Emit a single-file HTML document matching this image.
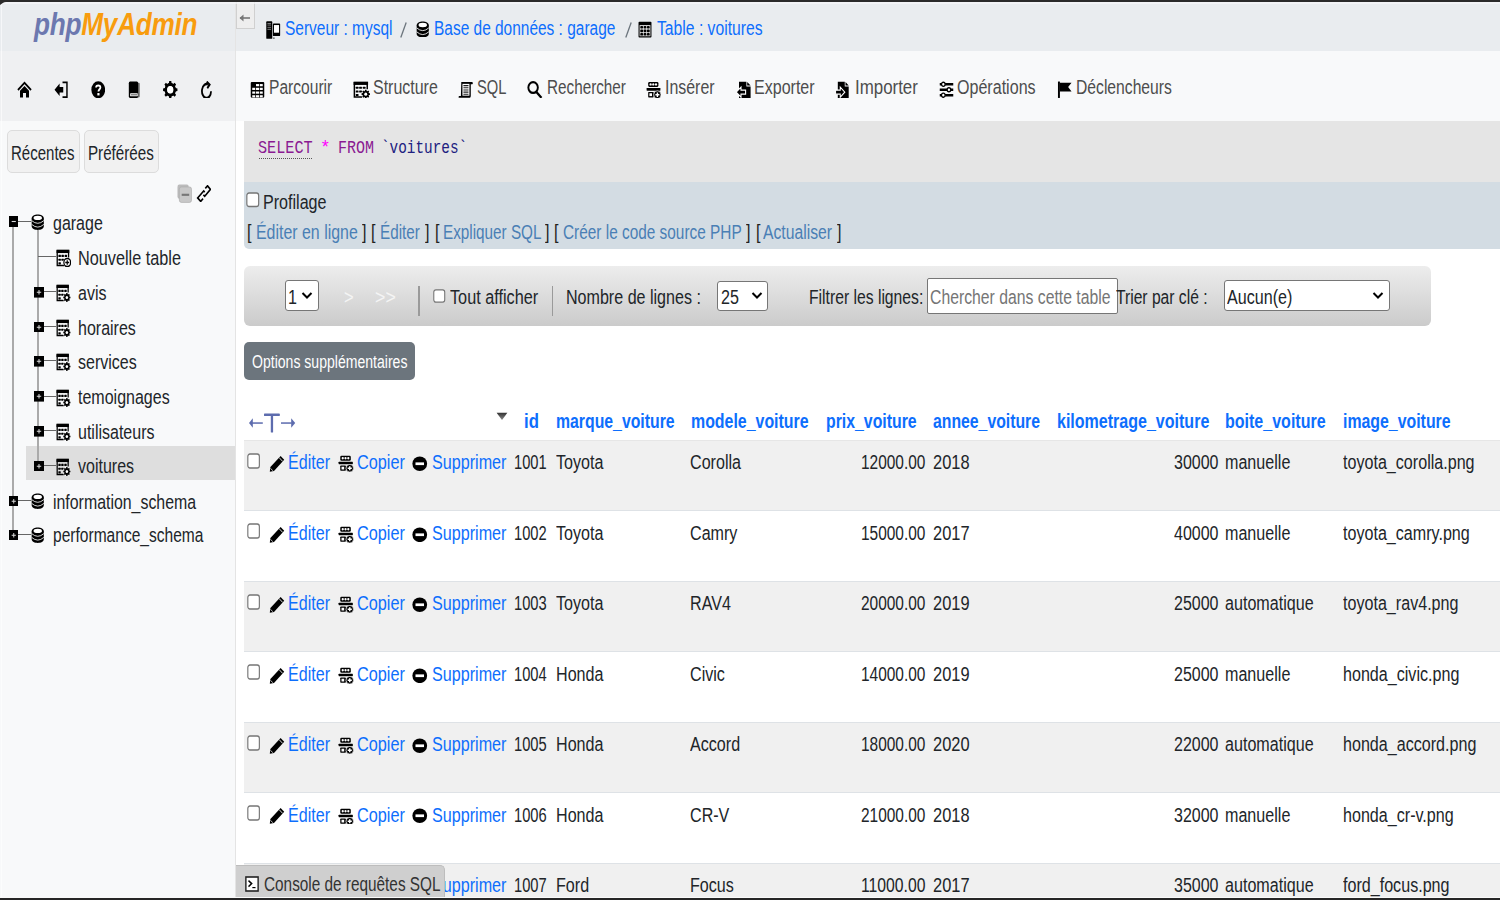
<!DOCTYPE html>
<html><head><meta charset="utf-8"><title>phpMyAdmin</title>
<style>
html,body{margin:0;padding:0;width:1500px;height:900px;overflow:hidden;background:#fff;font-family:"Liberation Sans",sans-serif}
.t{position:absolute;white-space:nowrap;line-height:normal;transform-origin:0 0}
svg{display:block}
</style></head><body>
<div style="position:absolute;left:0px;top:0px;width:1500px;height:2px;background:#2a2a2a;"></div><div style="position:absolute;left:0px;top:2px;width:236px;height:49px;background:#e9ecef;"></div><div style="position:absolute;left:0px;top:51px;width:236px;height:70px;background:#eff0f2;"></div><div style="position:absolute;left:0px;top:121px;width:236px;height:777px;background:#f8f9fa;"></div><div style="position:absolute;left:235px;top:2px;width:1px;height:896px;background:#e4e4e4;"></div><div style="position:absolute;left:236px;top:121px;width:2px;height:776px;background:#f4f4f4;"></div><div style="position:absolute;left:236px;top:2px;width:1264px;height:49px;background:#e9ecef;"></div><div style="position:absolute;left:236px;top:51px;width:1264px;height:70px;background:#f8f9fa;"></div><div style="position:absolute;left:236px;top:121px;width:1264px;height:777px;background:#ffffff;"></div><div style="position:absolute;left:34px;top:7px;font-family:'Liberation Sans';font-size:31px;font-weight:bold;font-style:italic;white-space:nowrap;transform-origin:0 0;transform:scaleX(0.845);letter-spacing:-0.3px"><span style="color:#6c78af">php</span><span style="color:#f89c0e">MyAdmin</span></div><svg style="position:absolute;left:17px;top:80.5px;" width="15" height="17.5" viewBox="0 0 16 16" preserveAspectRatio="none"><path d="M1 8.2 L8 1.6 L15 8.2" fill="none" stroke="#000" stroke-width="1.8"/><path d="M3.2 9 L8 4.6 L12.8 9 V15 H9.6 V11 H6.4 V15 H3.2 Z" fill="#000"/></svg><svg style="position:absolute;left:54px;top:80.5px;" width="14.5" height="17.5" viewBox="0 0 16 16" preserveAspectRatio="none"><path d="M0.6 8 L6.2 2.2 V5.4 H10.2 V10.6 H6.2 V13.8 Z" fill="#000"/><path d="M9.4 1.2 H14.3 V14.8 H9.4" fill="none" stroke="#000" stroke-width="1.6"/></svg><svg style="position:absolute;left:90.5px;top:80.5px;" width="14.5" height="17.5" viewBox="0 0 16 16" preserveAspectRatio="none"><ellipse cx="8" cy="8" rx="7.6" ry="7.8" fill="#000"/><path d="M5.6 6 C5.6 3.4 10.4 3.4 10.4 6 C10.4 7.6 8.2 7.8 8.2 9.6" fill="none" stroke="#fff" stroke-width="1.9"/><rect x="7" y="11" width="2.4" height="2.2" fill="#fff"/></svg><svg style="position:absolute;left:127.5px;top:80.5px;" width="13.0" height="17.5" viewBox="0 0 16 16" preserveAspectRatio="none"><rect x="2.5" y="1.5" width="12" height="13.5" rx="1.2" fill="#777"/><rect x="1" y="0.5" width="11.5" height="15" rx="1.6" fill="#000"/><rect x="2.6" y="11.2" width="9.5" height="2.8" rx="0.6" fill="#fff"/><rect x="3.4" y="12" width="8.2" height="1.2" fill="#777"/></svg><svg style="position:absolute;left:163px;top:80.5px;" width="14.5" height="17.5" viewBox="0 0 16 16" preserveAspectRatio="none"><path d="M13.72 6.48 L15.92 6.86 L15.92 9.14 L13.72 9.52 L13.12 10.97 L14.41 12.79 L12.79 14.41 L10.97 13.12 L9.52 13.72 L9.14 15.92 L6.86 15.92 L6.48 13.72 L5.03 13.12 L3.21 14.41 L1.59 12.79 L2.88 10.97 L2.28 9.52 L0.08 9.14 L0.08 6.86 L2.28 6.48 L2.88 5.03 L1.59 3.21 L3.21 1.59 L5.03 2.88 L6.48 2.28 L6.86 0.08 L9.14 0.08 L9.52 2.28 L10.97 2.88 L12.79 1.59 L14.41 3.21 L13.12 5.03Z" fill="#000"/><circle cx="8" cy="8" r="3.3" fill="#fff"/><circle cx="8" cy="8" r="5" fill="none" stroke="#000" stroke-width="2.6"/><circle cx="8" cy="8" r="3.4" fill="#fff"/></svg><svg style="position:absolute;left:200px;top:80.5px;" width="13" height="17.5" viewBox="0 0 16 16" preserveAspectRatio="none"><path d="M13.6 9.4 A5.6 6.4 0 1 1 9.8 3.1" fill="none" stroke="#000" stroke-width="2.2"/><path d="M8.2 0.6 L11.8 3.3 L9 6.6" fill="none" stroke="#000" stroke-width="2.2"/></svg><div style="position:absolute;left:6.5px;top:130px;width:73.0px;height:43px;background:#f1f1f1;border:1px solid #dcdcdc;border-radius:5px;box-sizing:border-box"></div><div style="position:absolute;left:83.5px;top:130px;width:75.0px;height:43px;background:#f1f1f1;border:1px solid #dcdcdc;border-radius:5px;box-sizing:border-box"></div><svg style="position:absolute;left:177px;top:184px;" width="15" height="19" viewBox="0 0 16 16" preserveAspectRatio="none"><rect x="0.5" y="0.5" width="12" height="12" rx="2" fill="#bbb"/><rect x="2.5" y="2.5" width="13" height="13" rx="2" fill="#c8c8c8" stroke="#aaa" stroke-width="0.6"/><rect x="5" y="8.2" width="8" height="1.8" fill="#777"/></svg><svg style="position:absolute;left:196px;top:185px;" width="15" height="17" viewBox="0 0 16 16" preserveAspectRatio="none"><path d="M9.9 3.2 L12.3 0.8 L15.4 4.2 L9.3 10.6 L7.9 9.2" fill="none" stroke="#000" stroke-width="1.7" stroke-linejoin="miter"/><path d="M9.3 6.8 L8.2 5.6 L1.8 12.2 L5 15.4 L7.5 12.9" fill="none" stroke="#000" stroke-width="1.7" stroke-linejoin="miter"/></svg><div style="position:absolute;left:26px;top:445.5px;width:209px;height:34.5px;background:#dedede;"></div><div style="position:absolute;left:12px;top:227px;width:2px;height:309px;background:#aaa;"></div><div style="position:absolute;left:37px;top:230px;width:1.7999999999999972px;height:238px;background:#aaa;"></div><svg style="position:absolute;left:8.5px;top:216px;" width="9.5" height="11" viewBox="0 0 16 16" preserveAspectRatio="none"><rect x="0" y="0" width="16" height="16" fill="#000"/><path d="M4.5 8 H11.5" stroke="#ddd" stroke-width="1.6"/></svg><div style="position:absolute;left:18px;top:221px;width:13px;height:1.1999999999999886px;background:#666;"></div><svg style="position:absolute;left:31px;top:214px;" width="13.5" height="16" viewBox="0 0 16 16" preserveAspectRatio="none"><path d="M0.8 4.2 C0.8 -0.9 15.2 -0.9 15.2 4.2 V12.2 C15.2 17.1 0.8 17.1 0.8 12.2 Z" fill="#000"/><ellipse cx="8" cy="3.9" rx="5" ry="2.1" fill="#fff"/><path d="M0.8 6.6 Q8 12 15.2 6.6" fill="none" stroke="#fff" stroke-width="0.9"/><path d="M0.8 10.4 Q8 15.8 15.2 10.4" fill="none" stroke="#fff" stroke-width="0.9"/></svg><div style="position:absolute;left:38px;top:256.3px;width:18px;height:1.1999999999999886px;background:#666;"></div><svg style="position:absolute;left:56px;top:249px;" width="15" height="18" viewBox="0 0 16 16" preserveAspectRatio="none"><rect x="0.6" y="0.6" width="13.6" height="3" fill="#000"/><path d="M1.3 1 V14.6 H8.5 M13.4 1 V7.5" fill="none" stroke="#000" stroke-width="1.4"/><rect x="2.6" y="5.2" width="2.6" height="1.9" rx="0.5" fill="#000"/><rect x="5.8" y="5.2" width="2.6" height="1.9" rx="0.5" fill="#000"/><rect x="9.2" y="5.2" width="2.6" height="1.9" rx="0.5" fill="#000"/><rect x="2.6" y="8.6" width="2.6" height="1.9" rx="0.5" fill="#000"/><rect x="5.8" y="8.6" width="2.6" height="1.9" rx="0.5" fill="#000"/><rect x="2.6" y="11.8" width="2.6" height="1.9" rx="0.5" fill="#000"/><circle cx="12" cy="12" r="4.3" fill="#fff"/><circle cx="12" cy="12" r="3.6" fill="none" stroke="#000" stroke-width="1.3"/><path d="M9.9 12 H14.1 M12 9.9 V14.1" stroke="#000" stroke-width="1.3"/></svg><svg style="position:absolute;left:33.5px;top:287.0px;" width="10.0" height="10.599999999999966" viewBox="0 0 16 16" preserveAspectRatio="none"><rect x="0" y="0" width="16" height="16" fill="#000"/><path d="M4.5 8 H11.5 M8 4.5 V11.5" stroke="#ddd" stroke-width="1.6"/></svg><div style="position:absolute;left:43.5px;top:291.2px;width:12.5px;height:1.1999999999999886px;background:#666;"></div><svg style="position:absolute;left:56px;top:284.2px;" width="14.5" height="18.0" viewBox="0 0 16 16" preserveAspectRatio="none"><rect x="0.6" y="0.6" width="13.6" height="3" fill="#000"/><path d="M1.3 1 V14.6 H8.5 M13.4 1 V7.5" fill="none" stroke="#000" stroke-width="1.4"/><rect x="2.6" y="5.2" width="2.6" height="1.9" rx="0.5" fill="#000"/><rect x="5.8" y="5.2" width="2.6" height="1.9" rx="0.5" fill="#000"/><rect x="9.2" y="5.2" width="2.6" height="1.9" rx="0.5" fill="#000"/><rect x="2.6" y="8.6" width="2.6" height="1.9" rx="0.5" fill="#000"/><rect x="5.8" y="8.6" width="2.6" height="1.9" rx="0.5" fill="#000"/><rect x="2.6" y="11.8" width="2.6" height="1.9" rx="0.5" fill="#000"/><circle cx="12" cy="12" r="4.2" fill="#fff" opacity="0.9"/><path d="M14.81 11.07 L15.94 11.30 L15.94 12.70 L14.81 12.93 L14.65 13.33 L15.28 14.29 L14.29 15.28 L13.33 14.65 L12.93 14.81 L12.70 15.94 L11.30 15.94 L11.07 14.81 L10.67 14.65 L9.71 15.28 L8.72 14.29 L9.35 13.33 L9.19 12.93 L8.06 12.70 L8.06 11.30 L9.19 11.07 L9.35 10.67 L8.72 9.71 L9.71 8.72 L10.67 9.35 L11.07 9.19 L11.30 8.06 L12.70 8.06 L12.93 9.19 L13.33 9.35 L14.29 8.72 L15.28 9.71 L14.65 10.67Z" fill="#000"/><circle cx="12" cy="12" r="1.4" fill="#fff"/></svg><svg style="position:absolute;left:33.5px;top:321.8px;" width="10.0" height="10.599999999999966" viewBox="0 0 16 16" preserveAspectRatio="none"><rect x="0" y="0" width="16" height="16" fill="#000"/><path d="M4.5 8 H11.5 M8 4.5 V11.5" stroke="#ddd" stroke-width="1.6"/></svg><div style="position:absolute;left:43.5px;top:326px;width:12.5px;height:1.1999999999999886px;background:#666;"></div><svg style="position:absolute;left:56px;top:319px;" width="14.5" height="18" viewBox="0 0 16 16" preserveAspectRatio="none"><rect x="0.6" y="0.6" width="13.6" height="3" fill="#000"/><path d="M1.3 1 V14.6 H8.5 M13.4 1 V7.5" fill="none" stroke="#000" stroke-width="1.4"/><rect x="2.6" y="5.2" width="2.6" height="1.9" rx="0.5" fill="#000"/><rect x="5.8" y="5.2" width="2.6" height="1.9" rx="0.5" fill="#000"/><rect x="9.2" y="5.2" width="2.6" height="1.9" rx="0.5" fill="#000"/><rect x="2.6" y="8.6" width="2.6" height="1.9" rx="0.5" fill="#000"/><rect x="5.8" y="8.6" width="2.6" height="1.9" rx="0.5" fill="#000"/><rect x="2.6" y="11.8" width="2.6" height="1.9" rx="0.5" fill="#000"/><circle cx="12" cy="12" r="4.2" fill="#fff" opacity="0.9"/><path d="M14.81 11.07 L15.94 11.30 L15.94 12.70 L14.81 12.93 L14.65 13.33 L15.28 14.29 L14.29 15.28 L13.33 14.65 L12.93 14.81 L12.70 15.94 L11.30 15.94 L11.07 14.81 L10.67 14.65 L9.71 15.28 L8.72 14.29 L9.35 13.33 L9.19 12.93 L8.06 12.70 L8.06 11.30 L9.19 11.07 L9.35 10.67 L8.72 9.71 L9.71 8.72 L10.67 9.35 L11.07 9.19 L11.30 8.06 L12.70 8.06 L12.93 9.19 L13.33 9.35 L14.29 8.72 L15.28 9.71 L14.65 10.67Z" fill="#000"/><circle cx="12" cy="12" r="1.4" fill="#fff"/></svg><svg style="position:absolute;left:33.5px;top:356.1px;" width="10.0" height="10.599999999999966" viewBox="0 0 16 16" preserveAspectRatio="none"><rect x="0" y="0" width="16" height="16" fill="#000"/><path d="M4.5 8 H11.5 M8 4.5 V11.5" stroke="#ddd" stroke-width="1.6"/></svg><div style="position:absolute;left:43.5px;top:360.3px;width:12.5px;height:1.1999999999999886px;background:#666;"></div><svg style="position:absolute;left:56px;top:353.3px;" width="14.5" height="18.0" viewBox="0 0 16 16" preserveAspectRatio="none"><rect x="0.6" y="0.6" width="13.6" height="3" fill="#000"/><path d="M1.3 1 V14.6 H8.5 M13.4 1 V7.5" fill="none" stroke="#000" stroke-width="1.4"/><rect x="2.6" y="5.2" width="2.6" height="1.9" rx="0.5" fill="#000"/><rect x="5.8" y="5.2" width="2.6" height="1.9" rx="0.5" fill="#000"/><rect x="9.2" y="5.2" width="2.6" height="1.9" rx="0.5" fill="#000"/><rect x="2.6" y="8.6" width="2.6" height="1.9" rx="0.5" fill="#000"/><rect x="5.8" y="8.6" width="2.6" height="1.9" rx="0.5" fill="#000"/><rect x="2.6" y="11.8" width="2.6" height="1.9" rx="0.5" fill="#000"/><circle cx="12" cy="12" r="4.2" fill="#fff" opacity="0.9"/><path d="M14.81 11.07 L15.94 11.30 L15.94 12.70 L14.81 12.93 L14.65 13.33 L15.28 14.29 L14.29 15.28 L13.33 14.65 L12.93 14.81 L12.70 15.94 L11.30 15.94 L11.07 14.81 L10.67 14.65 L9.71 15.28 L8.72 14.29 L9.35 13.33 L9.19 12.93 L8.06 12.70 L8.06 11.30 L9.19 11.07 L9.35 10.67 L8.72 9.71 L9.71 8.72 L10.67 9.35 L11.07 9.19 L11.30 8.06 L12.70 8.06 L12.93 9.19 L13.33 9.35 L14.29 8.72 L15.28 9.71 L14.65 10.67Z" fill="#000"/><circle cx="12" cy="12" r="1.4" fill="#fff"/></svg><svg style="position:absolute;left:33.5px;top:391.40000000000003px;" width="10.0" height="10.599999999999966" viewBox="0 0 16 16" preserveAspectRatio="none"><rect x="0" y="0" width="16" height="16" fill="#000"/><path d="M4.5 8 H11.5 M8 4.5 V11.5" stroke="#ddd" stroke-width="1.6"/></svg><div style="position:absolute;left:43.5px;top:395.6px;width:12.5px;height:1.1999999999999886px;background:#666;"></div><svg style="position:absolute;left:56px;top:388.6px;" width="14.5" height="18.0" viewBox="0 0 16 16" preserveAspectRatio="none"><rect x="0.6" y="0.6" width="13.6" height="3" fill="#000"/><path d="M1.3 1 V14.6 H8.5 M13.4 1 V7.5" fill="none" stroke="#000" stroke-width="1.4"/><rect x="2.6" y="5.2" width="2.6" height="1.9" rx="0.5" fill="#000"/><rect x="5.8" y="5.2" width="2.6" height="1.9" rx="0.5" fill="#000"/><rect x="9.2" y="5.2" width="2.6" height="1.9" rx="0.5" fill="#000"/><rect x="2.6" y="8.6" width="2.6" height="1.9" rx="0.5" fill="#000"/><rect x="5.8" y="8.6" width="2.6" height="1.9" rx="0.5" fill="#000"/><rect x="2.6" y="11.8" width="2.6" height="1.9" rx="0.5" fill="#000"/><circle cx="12" cy="12" r="4.2" fill="#fff" opacity="0.9"/><path d="M14.81 11.07 L15.94 11.30 L15.94 12.70 L14.81 12.93 L14.65 13.33 L15.28 14.29 L14.29 15.28 L13.33 14.65 L12.93 14.81 L12.70 15.94 L11.30 15.94 L11.07 14.81 L10.67 14.65 L9.71 15.28 L8.72 14.29 L9.35 13.33 L9.19 12.93 L8.06 12.70 L8.06 11.30 L9.19 11.07 L9.35 10.67 L8.72 9.71 L9.71 8.72 L10.67 9.35 L11.07 9.19 L11.30 8.06 L12.70 8.06 L12.93 9.19 L13.33 9.35 L14.29 8.72 L15.28 9.71 L14.65 10.67Z" fill="#000"/><circle cx="12" cy="12" r="1.4" fill="#fff"/></svg><svg style="position:absolute;left:33.5px;top:426.1px;" width="10.0" height="10.599999999999966" viewBox="0 0 16 16" preserveAspectRatio="none"><rect x="0" y="0" width="16" height="16" fill="#000"/><path d="M4.5 8 H11.5 M8 4.5 V11.5" stroke="#ddd" stroke-width="1.6"/></svg><div style="position:absolute;left:43.5px;top:430.3px;width:12.5px;height:1.1999999999999886px;background:#666;"></div><svg style="position:absolute;left:56px;top:423.3px;" width="14.5" height="18.0" viewBox="0 0 16 16" preserveAspectRatio="none"><rect x="0.6" y="0.6" width="13.6" height="3" fill="#000"/><path d="M1.3 1 V14.6 H8.5 M13.4 1 V7.5" fill="none" stroke="#000" stroke-width="1.4"/><rect x="2.6" y="5.2" width="2.6" height="1.9" rx="0.5" fill="#000"/><rect x="5.8" y="5.2" width="2.6" height="1.9" rx="0.5" fill="#000"/><rect x="9.2" y="5.2" width="2.6" height="1.9" rx="0.5" fill="#000"/><rect x="2.6" y="8.6" width="2.6" height="1.9" rx="0.5" fill="#000"/><rect x="5.8" y="8.6" width="2.6" height="1.9" rx="0.5" fill="#000"/><rect x="2.6" y="11.8" width="2.6" height="1.9" rx="0.5" fill="#000"/><circle cx="12" cy="12" r="4.2" fill="#fff" opacity="0.9"/><path d="M14.81 11.07 L15.94 11.30 L15.94 12.70 L14.81 12.93 L14.65 13.33 L15.28 14.29 L14.29 15.28 L13.33 14.65 L12.93 14.81 L12.70 15.94 L11.30 15.94 L11.07 14.81 L10.67 14.65 L9.71 15.28 L8.72 14.29 L9.35 13.33 L9.19 12.93 L8.06 12.70 L8.06 11.30 L9.19 11.07 L9.35 10.67 L8.72 9.71 L9.71 8.72 L10.67 9.35 L11.07 9.19 L11.30 8.06 L12.70 8.06 L12.93 9.19 L13.33 9.35 L14.29 8.72 L15.28 9.71 L14.65 10.67Z" fill="#000"/><circle cx="12" cy="12" r="1.4" fill="#fff"/></svg><svg style="position:absolute;left:33.5px;top:460.6px;" width="10.0" height="10.599999999999966" viewBox="0 0 16 16" preserveAspectRatio="none"><rect x="0" y="0" width="16" height="16" fill="#000"/><path d="M4.5 8 H11.5 M8 4.5 V11.5" stroke="#ddd" stroke-width="1.6"/></svg><div style="position:absolute;left:43.5px;top:464.8px;width:12.5px;height:1.1999999999999886px;background:#666;"></div><svg style="position:absolute;left:56px;top:457.8px;" width="14.5" height="18.0" viewBox="0 0 16 16" preserveAspectRatio="none"><rect x="0.6" y="0.6" width="13.6" height="3" fill="#000"/><path d="M1.3 1 V14.6 H8.5 M13.4 1 V7.5" fill="none" stroke="#000" stroke-width="1.4"/><rect x="2.6" y="5.2" width="2.6" height="1.9" rx="0.5" fill="#000"/><rect x="5.8" y="5.2" width="2.6" height="1.9" rx="0.5" fill="#000"/><rect x="9.2" y="5.2" width="2.6" height="1.9" rx="0.5" fill="#000"/><rect x="2.6" y="8.6" width="2.6" height="1.9" rx="0.5" fill="#000"/><rect x="5.8" y="8.6" width="2.6" height="1.9" rx="0.5" fill="#000"/><rect x="2.6" y="11.8" width="2.6" height="1.9" rx="0.5" fill="#000"/><circle cx="12" cy="12" r="4.2" fill="#fff" opacity="0.9"/><path d="M14.81 11.07 L15.94 11.30 L15.94 12.70 L14.81 12.93 L14.65 13.33 L15.28 14.29 L14.29 15.28 L13.33 14.65 L12.93 14.81 L12.70 15.94 L11.30 15.94 L11.07 14.81 L10.67 14.65 L9.71 15.28 L8.72 14.29 L9.35 13.33 L9.19 12.93 L8.06 12.70 L8.06 11.30 L9.19 11.07 L9.35 10.67 L8.72 9.71 L9.71 8.72 L10.67 9.35 L11.07 9.19 L11.30 8.06 L12.70 8.06 L12.93 9.19 L13.33 9.35 L14.29 8.72 L15.28 9.71 L14.65 10.67Z" fill="#000"/><circle cx="12" cy="12" r="1.4" fill="#fff"/></svg><svg style="position:absolute;left:8.5px;top:495.8px;" width="9.5" height="10.599999999999966" viewBox="0 0 16 16" preserveAspectRatio="none"><rect x="0" y="0" width="16" height="16" fill="#000"/><path d="M4.5 8 H11.5 M8 4.5 V11.5" stroke="#ddd" stroke-width="1.6"/></svg><div style="position:absolute;left:18px;top:500px;width:13px;height:1.1999999999999886px;background:#666;"></div><svg style="position:absolute;left:31px;top:493px;" width="13.5" height="16" viewBox="0 0 16 16" preserveAspectRatio="none"><path d="M0.8 4.2 C0.8 -0.9 15.2 -0.9 15.2 4.2 V12.2 C15.2 17.1 0.8 17.1 0.8 12.2 Z" fill="#000"/><ellipse cx="8" cy="3.9" rx="5" ry="2.1" fill="#fff"/><path d="M0.8 6.6 Q8 12 15.2 6.6" fill="none" stroke="#fff" stroke-width="0.9"/><path d="M0.8 10.4 Q8 15.8 15.2 10.4" fill="none" stroke="#fff" stroke-width="0.9"/></svg><svg style="position:absolute;left:8.5px;top:529.5999999999999px;" width="9.5" height="10.600000000000023" viewBox="0 0 16 16" preserveAspectRatio="none"><rect x="0" y="0" width="16" height="16" fill="#000"/><path d="M4.5 8 H11.5 M8 4.5 V11.5" stroke="#ddd" stroke-width="1.6"/></svg><div style="position:absolute;left:18px;top:533.8px;width:13px;height:1.2000000000000455px;background:#666;"></div><svg style="position:absolute;left:31px;top:526.8px;" width="13.5" height="16.0" viewBox="0 0 16 16" preserveAspectRatio="none"><path d="M0.8 4.2 C0.8 -0.9 15.2 -0.9 15.2 4.2 V12.2 C15.2 17.1 0.8 17.1 0.8 12.2 Z" fill="#000"/><ellipse cx="8" cy="3.9" rx="5" ry="2.1" fill="#fff"/><path d="M0.8 6.6 Q8 12 15.2 6.6" fill="none" stroke="#fff" stroke-width="0.9"/><path d="M0.8 10.4 Q8 15.8 15.2 10.4" fill="none" stroke="#fff" stroke-width="0.9"/></svg><div style="position:absolute;left:235.5px;top:2px;width:19.0px;height:26.5px;background:#eeeeee;border:1px solid #d0d0d0;border-top:none;box-sizing:border-box"></div><svg style="position:absolute;left:239px;top:13px" width="12" height="10" viewBox="0 0 12 10"><path d="M1 5 H11" stroke="#777" stroke-width="1.6"/><path d="M0.5 5 L4.5 1.5 L4.5 8.5 Z" fill="#777"/></svg><svg style="position:absolute;left:266px;top:20.5px;" width="14.5" height="18.0" viewBox="0 0 16 16" preserveAspectRatio="none"><rect x="0.3" y="0.2" width="6.6" height="15.6" rx="0.8" fill="#000"/><path d="M1.6 2.2 H5.6 M1.6 3.6 H5.6 M1.6 5.6 H5.6 M1.6 7.4 H5.6" stroke="#ccc" stroke-width="0.6"/><rect x="7.6" y="2.2" width="8" height="11.2" rx="0.8" fill="#000"/><rect x="8.8" y="3.6" width="5.6" height="6.8" fill="#fff"/><rect x="7.6" y="14.8" width="2" height="0.8" fill="#222"/></svg><svg style="position:absolute;left:399.5px;top:21.5px;" width="7.0" height="16.0" viewBox="0 0 7 16" preserveAspectRatio="none"><path d="M0.8 15.5 L6.2 0.5" stroke="#6c757d" stroke-width="1.3"/></svg><svg style="position:absolute;left:415.5px;top:20.7px;" width="13.5" height="16.599999999999998" viewBox="0 0 16 16" preserveAspectRatio="none"><path d="M0.8 4.2 C0.8 -0.9 15.2 -0.9 15.2 4.2 V12.2 C15.2 17.1 0.8 17.1 0.8 12.2 Z" fill="#000"/><ellipse cx="8" cy="3.9" rx="5" ry="2.1" fill="#fff"/><path d="M0.8 6.6 Q8 12 15.2 6.6" fill="none" stroke="#fff" stroke-width="0.9"/><path d="M0.8 10.4 Q8 15.8 15.2 10.4" fill="none" stroke="#fff" stroke-width="0.9"/></svg><svg style="position:absolute;left:624.5px;top:21.5px;" width="7.0" height="16.0" viewBox="0 0 7 16" preserveAspectRatio="none"><path d="M0.8 15.5 L6.2 0.5" stroke="#6c757d" stroke-width="1.3"/></svg><svg style="position:absolute;left:638px;top:20.8px;" width="14" height="17.2" viewBox="0 0 16 16" preserveAspectRatio="none"><rect x="0.6" y="0.6" width="14.8" height="14.8" rx="1" fill="#000"/><rect x="1.8" y="3.8" width="12.4" height="10.4" fill="#ddd"/><rect x="2.6" y="4.6" width="3.2" height="2.4" rx="0.9" fill="#000"/><rect x="2.6" y="8" width="3.2" height="2.4" rx="0.9" fill="#000"/><rect x="2.6" y="11.2" width="3.2" height="2.4" rx="0.9" fill="#000"/><rect x="6.4" y="4.6" width="3.2" height="2.4" rx="0.9" fill="#000"/><rect x="6.4" y="8" width="3.2" height="2.4" rx="0.9" fill="#000"/><rect x="6.4" y="11.2" width="3.2" height="2.4" rx="0.9" fill="#000"/><rect x="10.2" y="4.6" width="3.2" height="2.4" rx="0.9" fill="#000"/><rect x="10.2" y="8" width="3.2" height="2.4" rx="0.9" fill="#000"/><rect x="10.2" y="11.2" width="3.2" height="2.4" rx="0.9" fill="#000"/></svg><svg style="position:absolute;left:250px;top:80.5px;" width="15" height="17.5" viewBox="0 0 16 16" preserveAspectRatio="none"><rect x="0.8" y="0.8" width="14.4" height="14.4" rx="1" fill="#000"/><rect x="2.4" y="6.2" width="3.2" height="2" fill="#fff"/><rect x="2.4" y="9.6" width="3.2" height="2" fill="#fff"/><rect x="2.4" y="13" width="3.2" height="2" fill="#fff"/><rect x="6.4" y="2.8" width="3.2" height="2" fill="#fff"/><rect x="6.4" y="6.2" width="3.2" height="2" fill="#fff"/><rect x="6.4" y="9.6" width="3.2" height="2" fill="#fff"/><rect x="6.4" y="13" width="3.2" height="2" fill="#fff"/><rect x="10.4" y="2.8" width="3.2" height="2" fill="#fff"/><rect x="10.4" y="6.2" width="3.2" height="2" fill="#fff"/><rect x="10.4" y="9.6" width="3.2" height="2" fill="#fff"/><rect x="10.4" y="13" width="3.2" height="2" fill="#fff"/></svg><svg style="position:absolute;left:352.5px;top:80.5px;" width="17.0" height="17.5" viewBox="0 0 16 16" preserveAspectRatio="none"><rect x="0.6" y="0.6" width="13.6" height="3" fill="#000"/><path d="M1.3 1 V14.6 H8.5 M13.4 1 V7.5" fill="none" stroke="#000" stroke-width="1.4"/><rect x="2.6" y="5.2" width="2.6" height="1.9" rx="0.5" fill="#000"/><rect x="5.8" y="5.2" width="2.6" height="1.9" rx="0.5" fill="#000"/><rect x="9.2" y="5.2" width="2.6" height="1.9" rx="0.5" fill="#000"/><rect x="2.6" y="8.6" width="2.6" height="1.9" rx="0.5" fill="#000"/><rect x="5.8" y="8.6" width="2.6" height="1.9" rx="0.5" fill="#000"/><rect x="2.6" y="11.8" width="2.6" height="1.9" rx="0.5" fill="#000"/><circle cx="12" cy="12" r="4.2" fill="#fff" opacity="0.9"/><path d="M14.81 11.07 L15.94 11.30 L15.94 12.70 L14.81 12.93 L14.65 13.33 L15.28 14.29 L14.29 15.28 L13.33 14.65 L12.93 14.81 L12.70 15.94 L11.30 15.94 L11.07 14.81 L10.67 14.65 L9.71 15.28 L8.72 14.29 L9.35 13.33 L9.19 12.93 L8.06 12.70 L8.06 11.30 L9.19 11.07 L9.35 10.67 L8.72 9.71 L9.71 8.72 L10.67 9.35 L11.07 9.19 L11.30 8.06 L12.70 8.06 L12.93 9.19 L13.33 9.35 L14.29 8.72 L15.28 9.71 L14.65 10.67Z" fill="#000"/><circle cx="12" cy="12" r="1.4" fill="#fff"/></svg><svg style="position:absolute;left:458px;top:80.5px;" width="15.5" height="17.5" viewBox="0 0 16 16" preserveAspectRatio="none"><path d="M3.4 0.8 H14.6 C15.6 0.8 15.6 3 14.6 3 H13.2 V13.4 C13.2 14.8 12.4 15.4 11.4 15.4 H1.2 C0.4 15.4 0.4 13.6 1.4 13.6 H3 Z" fill="#000"/><rect x="4.6" y="2.6" width="7.2" height="10.8" fill="#fff"/><path d="M5.6 4.2 H10.8 M5.6 6.2 H10.8 M5.6 8.2 H10.8 M5.6 10.2 H10.8 M5.6 12.1 H10.8" stroke="#222" stroke-width="1"/></svg><svg style="position:absolute;left:527px;top:80.5px;" width="15.5" height="17.5" viewBox="0 0 16 16" preserveAspectRatio="none"><circle cx="6.3" cy="6" r="4.9" fill="none" stroke="#000" stroke-width="2"/><path d="M9.6 10 L15 15.4" stroke="#000" stroke-width="2.2"/></svg><svg style="position:absolute;left:646px;top:80.5px;" width="16" height="17.5" viewBox="0 0 16 16" preserveAspectRatio="none"><rect x="2.2" y="0.8" width="10.2" height="4.6" rx="1.2" fill="#000"/><circle cx="4.6" cy="3.1" r="1.1" fill="#fff"/><circle cx="7.3" cy="3.1" r="1.1" fill="#fff"/><circle cx="10" cy="3.1" r="1.1" fill="#fff"/><rect x="0.6" y="6.4" width="13.8" height="2.4" rx="0.4" fill="#000"/><rect x="2.2" y="10" width="5.4" height="5" rx="0.6" fill="#000"/><rect x="3.4" y="11.2" width="2.6" height="2.6" fill="#fff"/><circle cx="11.4" cy="12.6" r="3.6" fill="#000" stroke="#fff" stroke-width="0.6"/><path d="M9.4 12.6 H13.4 M11.4 10.6 V14.6" stroke="#fff" stroke-width="1.4"/></svg><svg style="position:absolute;left:736px;top:80.5px;" width="16" height="17.5" viewBox="0 0 16 16" preserveAspectRatio="none"><path d="M3 0.6 H10.4 V5 H14.6 V15.6 H3 Z" fill="#000"/><path d="M11.2 0.8 L14.6 4.2 H11.2 Z" fill="#000"/><path d="M0.2 10.2 L5 5.6 V8.4 H9.6 V12 H5 V14.8 Z" fill="#000" stroke="#fff" stroke-width="1.1"/></svg><svg style="position:absolute;left:834.5px;top:80.5px;" width="15.0" height="17.5" viewBox="0 0 16 16" preserveAspectRatio="none"><path d="M3 0.6 H10.4 V5 H14.6 V15.6 H3 Z" fill="#000"/><path d="M11.2 0.8 L14.6 4.2 H11.2 Z" fill="#000"/><path d="M10.4 10.2 L5.6 5.6 V8.4 H0.6 V12 H5.6 V14.8 Z" fill="#000" stroke="#fff" stroke-width="1.1"/></svg><svg style="position:absolute;left:938.5px;top:80.5px;" width="15.0" height="17.5" viewBox="0 0 16 16" preserveAspectRatio="none"><path d="M0.8 3 H15.2 M0.8 8 H15.2 M0.8 13 H15.2" stroke="#000" stroke-width="2.3"/><circle cx="4.6" cy="3" r="1.9" fill="#fff" stroke="#000" stroke-width="1.3"/><circle cx="10.6" cy="8" r="1.9" fill="#fff" stroke="#000" stroke-width="1.3"/><circle cx="4.6" cy="13" r="1.9" fill="#fff" stroke="#000" stroke-width="1.3"/></svg><svg style="position:absolute;left:1056.5px;top:80.5px;" width="15.5" height="17.5" viewBox="0 0 16 16" preserveAspectRatio="none"><rect x="1" y="0.5" width="2" height="15" fill="#000"/><path d="M3 1.5 H15 L11.5 5.5 L15 9.5 H3 Z" fill="#000"/></svg><div style="position:absolute;left:244px;top:121px;width:1256px;height:61px;background:#e5e5e5;"></div><div style="position:absolute;left:259px;top:157.5px;width:53px;height:1.0px;background:transparent;border-top:1px dotted #555"></div><div style="position:absolute;left:244px;top:182px;width:1256px;height:66.80000000000001px;background:#d3dce3;border-bottom-left-radius:5px"></div><svg style="position:absolute;left:246px;top:192px;" width="13.5" height="15.5" viewBox="0 0 16 16" preserveAspectRatio="none"><rect x="1" y="1" width="14" height="14" rx="2.6" fill="#fff" stroke="#767676" stroke-width="1.4"/></svg><div style="position:absolute;left:244px;top:265.7px;width:1187px;height:60.19999999999999px;background:linear-gradient(#ededed,#cbcbcb);border-radius:6px"></div><div style="position:absolute;left:285px;top:279.7px;width:33.69999999999999px;height:31.0px;background:#fff;border:1px solid #767676;border-radius:3px;box-sizing:border-box"></div><svg style="position:absolute;left:301px;top:291px" width="12" height="9" viewBox="0 0 12 9"><path d="M1.5 2 L6 6.5 L10.5 2" fill="none" stroke="#000" stroke-width="2"/></svg><div style="position:absolute;left:418px;top:286px;width:1.5px;height:30px;background:#9a9a9a;"></div><svg style="position:absolute;left:433px;top:288.5px;" width="12.5" height="14.0" viewBox="0 0 16 16" preserveAspectRatio="none"><rect x="1" y="1" width="14" height="14" rx="2.6" fill="#fff" stroke="#767676" stroke-width="1.4"/></svg><div style="position:absolute;left:551.5px;top:286px;width:1.5px;height:30px;background:#9a9a9a;"></div><div style="position:absolute;left:717.3px;top:280.5px;width:50.700000000000045px;height:30.5px;background:#fff;border:1px solid #767676;border-radius:3px;box-sizing:border-box"></div><svg style="position:absolute;left:751px;top:291px" width="12" height="9" viewBox="0 0 12 9"><path d="M1.5 2 L6 6.5 L10.5 2" fill="none" stroke="#000" stroke-width="2"/></svg><div style="position:absolute;left:927px;top:278px;width:190.5px;height:36px;background:#fff;border:1px solid #767676;border-radius:2px;box-sizing:border-box"></div><div style="position:absolute;left:1223.5px;top:280.3px;width:166.0px;height:30.399999999999977px;background:#fff;border:1px solid #767676;border-radius:3px;box-sizing:border-box"></div><svg style="position:absolute;left:1372px;top:291px" width="12" height="9" viewBox="0 0 12 9"><path d="M1.5 2 L6 6.5 L10.5 2" fill="none" stroke="#000" stroke-width="2"/></svg><div style="position:absolute;left:244px;top:342px;width:171px;height:38px;background:#6c757d;border-radius:5px"></div><svg style="position:absolute;left:244px;top:405px" width="60" height="35" viewBox="244 405 60 35"><g fill="#5d6cae" stroke="none"><path d="M249 423 L252.8 418.2 L252.8 427.8 Z"/><rect x="252" y="422.3" width="10.8" height="1.5"/><rect x="264" y="413.6" width="15.8" height="2.5" rx="0.6"/><rect x="270.8" y="414" width="2.3" height="18.6" rx="0.6"/><rect x="281" y="422.3" width="10.8" height="1.5"/><path d="M295.2 423 L291.2 418.2 L291.2 427.8 Z"/></g></svg><svg style="position:absolute;left:495.5px;top:411.5px" width="12" height="9" viewBox="0 0 12 9"><defs><linearGradient id="tg" x1="0" y1="0" x2="0" y2="1"><stop offset="0" stop-color="#333"/><stop offset="1" stop-color="#888"/></linearGradient></defs><path d="M0.6 0.8 H11.4 L6 8 Z" fill="url(#tg)"/></svg><div style="position:absolute;left:244px;top:439.5px;width:1256px;height:1.5px;background:#e6e6e6;"></div><div style="position:absolute;left:244px;top:440.8px;width:1256px;height:69.44999999999999px;background:#f0f0f0;"></div><div style="position:absolute;left:244px;top:510.25px;width:1256px;height:1.0px;background:#dee2e6;"></div><svg style="position:absolute;left:246.8px;top:452.7px;" width="13.199999999999989" height="16.0" viewBox="0 0 16 16" preserveAspectRatio="none"><rect x="1" y="1" width="14" height="14" rx="2.6" fill="#fff" stroke="#767676" stroke-width="1.4"/></svg><svg style="position:absolute;left:268.5px;top:455.2px;" width="16.0" height="17.5" viewBox="0 0 16 16" preserveAspectRatio="none"><path d="M11.6 0.8 L15.2 4.4 L5 14.6 L0.8 15.2 L1.4 11 Z" fill="#000"/><path d="M10.2 2.4 L13.6 5.8" stroke="#fff" stroke-width="0.8"/><path d="M1.6 12.2 L3.8 14.4" stroke="#fff" stroke-width="0.7"/></svg><svg style="position:absolute;left:338px;top:455.4px;" width="16.5" height="16.80000000000001" viewBox="0 0 16 16" preserveAspectRatio="none"><rect x="2.2" y="0.8" width="10.2" height="4.6" rx="1.2" fill="#000"/><circle cx="4.6" cy="3.1" r="1.1" fill="#fff"/><circle cx="7.3" cy="3.1" r="1.1" fill="#fff"/><circle cx="10" cy="3.1" r="1.1" fill="#fff"/><rect x="0.6" y="6.4" width="13.8" height="2.4" rx="0.4" fill="#000"/><rect x="2.2" y="10" width="5.4" height="5" rx="0.6" fill="#000"/><rect x="3.4" y="11.2" width="2.6" height="2.6" fill="#fff"/><circle cx="11.4" cy="12.6" r="3.6" fill="#000" stroke="#fff" stroke-width="0.6"/><path d="M9.4 12.6 H13.4 M11.4 10.6 V14.6" stroke="#fff" stroke-width="1.4"/></svg><svg style="position:absolute;left:412px;top:456.2px;" width="15.5" height="15.5" viewBox="0 0 16 16" preserveAspectRatio="none"><circle cx="8" cy="8" r="7.6" fill="#000"/><rect x="3.6" y="6.6" width="8.8" height="2.8" fill="#fff"/></svg><div style="position:absolute;left:244px;top:511.25px;width:1256px;height:69.45000000000005px;background:#ffffff;"></div><div style="position:absolute;left:244px;top:580.7px;width:1256px;height:1.0px;background:#dee2e6;"></div><svg style="position:absolute;left:246.8px;top:523.15px;" width="13.199999999999989" height="16.0" viewBox="0 0 16 16" preserveAspectRatio="none"><rect x="1" y="1" width="14" height="14" rx="2.6" fill="#fff" stroke="#767676" stroke-width="1.4"/></svg><svg style="position:absolute;left:268.5px;top:525.65px;" width="16.0" height="17.5" viewBox="0 0 16 16" preserveAspectRatio="none"><path d="M11.6 0.8 L15.2 4.4 L5 14.6 L0.8 15.2 L1.4 11 Z" fill="#000"/><path d="M10.2 2.4 L13.6 5.8" stroke="#fff" stroke-width="0.8"/><path d="M1.6 12.2 L3.8 14.4" stroke="#fff" stroke-width="0.7"/></svg><svg style="position:absolute;left:338px;top:525.85px;" width="16.5" height="16.799999999999955" viewBox="0 0 16 16" preserveAspectRatio="none"><rect x="2.2" y="0.8" width="10.2" height="4.6" rx="1.2" fill="#000"/><circle cx="4.6" cy="3.1" r="1.1" fill="#fff"/><circle cx="7.3" cy="3.1" r="1.1" fill="#fff"/><circle cx="10" cy="3.1" r="1.1" fill="#fff"/><rect x="0.6" y="6.4" width="13.8" height="2.4" rx="0.4" fill="#000"/><rect x="2.2" y="10" width="5.4" height="5" rx="0.6" fill="#000"/><rect x="3.4" y="11.2" width="2.6" height="2.6" fill="#fff"/><circle cx="11.4" cy="12.6" r="3.6" fill="#000" stroke="#fff" stroke-width="0.6"/><path d="M9.4 12.6 H13.4 M11.4 10.6 V14.6" stroke="#fff" stroke-width="1.4"/></svg><svg style="position:absolute;left:412px;top:526.65px;" width="15.5" height="15.5" viewBox="0 0 16 16" preserveAspectRatio="none"><circle cx="8" cy="8" r="7.6" fill="#000"/><rect x="3.6" y="6.6" width="8.8" height="2.8" fill="#fff"/></svg><div style="position:absolute;left:244px;top:581.7px;width:1256px;height:69.45000000000005px;background:#f0f0f0;"></div><div style="position:absolute;left:244px;top:651.1500000000001px;width:1256px;height:1.0px;background:#dee2e6;"></div><svg style="position:absolute;left:246.8px;top:593.6px;" width="13.199999999999989" height="16.0" viewBox="0 0 16 16" preserveAspectRatio="none"><rect x="1" y="1" width="14" height="14" rx="2.6" fill="#fff" stroke="#767676" stroke-width="1.4"/></svg><svg style="position:absolute;left:268.5px;top:596.1px;" width="16.0" height="17.5" viewBox="0 0 16 16" preserveAspectRatio="none"><path d="M11.6 0.8 L15.2 4.4 L5 14.6 L0.8 15.2 L1.4 11 Z" fill="#000"/><path d="M10.2 2.4 L13.6 5.8" stroke="#fff" stroke-width="0.8"/><path d="M1.6 12.2 L3.8 14.4" stroke="#fff" stroke-width="0.7"/></svg><svg style="position:absolute;left:338px;top:596.3000000000001px;" width="16.5" height="16.799999999999955" viewBox="0 0 16 16" preserveAspectRatio="none"><rect x="2.2" y="0.8" width="10.2" height="4.6" rx="1.2" fill="#000"/><circle cx="4.6" cy="3.1" r="1.1" fill="#fff"/><circle cx="7.3" cy="3.1" r="1.1" fill="#fff"/><circle cx="10" cy="3.1" r="1.1" fill="#fff"/><rect x="0.6" y="6.4" width="13.8" height="2.4" rx="0.4" fill="#000"/><rect x="2.2" y="10" width="5.4" height="5" rx="0.6" fill="#000"/><rect x="3.4" y="11.2" width="2.6" height="2.6" fill="#fff"/><circle cx="11.4" cy="12.6" r="3.6" fill="#000" stroke="#fff" stroke-width="0.6"/><path d="M9.4 12.6 H13.4 M11.4 10.6 V14.6" stroke="#fff" stroke-width="1.4"/></svg><svg style="position:absolute;left:412px;top:597.1px;" width="15.5" height="15.5" viewBox="0 0 16 16" preserveAspectRatio="none"><circle cx="8" cy="8" r="7.6" fill="#000"/><rect x="3.6" y="6.6" width="8.8" height="2.8" fill="#fff"/></svg><div style="position:absolute;left:244px;top:652.1500000000001px;width:1256px;height:69.45000000000005px;background:#ffffff;"></div><div style="position:absolute;left:244px;top:721.6000000000001px;width:1256px;height:1.0px;background:#dee2e6;"></div><svg style="position:absolute;left:246.8px;top:664.05px;" width="13.199999999999989" height="16.0" viewBox="0 0 16 16" preserveAspectRatio="none"><rect x="1" y="1" width="14" height="14" rx="2.6" fill="#fff" stroke="#767676" stroke-width="1.4"/></svg><svg style="position:absolute;left:268.5px;top:666.55px;" width="16.0" height="17.5" viewBox="0 0 16 16" preserveAspectRatio="none"><path d="M11.6 0.8 L15.2 4.4 L5 14.6 L0.8 15.2 L1.4 11 Z" fill="#000"/><path d="M10.2 2.4 L13.6 5.8" stroke="#fff" stroke-width="0.8"/><path d="M1.6 12.2 L3.8 14.4" stroke="#fff" stroke-width="0.7"/></svg><svg style="position:absolute;left:338px;top:666.75px;" width="16.5" height="16.799999999999955" viewBox="0 0 16 16" preserveAspectRatio="none"><rect x="2.2" y="0.8" width="10.2" height="4.6" rx="1.2" fill="#000"/><circle cx="4.6" cy="3.1" r="1.1" fill="#fff"/><circle cx="7.3" cy="3.1" r="1.1" fill="#fff"/><circle cx="10" cy="3.1" r="1.1" fill="#fff"/><rect x="0.6" y="6.4" width="13.8" height="2.4" rx="0.4" fill="#000"/><rect x="2.2" y="10" width="5.4" height="5" rx="0.6" fill="#000"/><rect x="3.4" y="11.2" width="2.6" height="2.6" fill="#fff"/><circle cx="11.4" cy="12.6" r="3.6" fill="#000" stroke="#fff" stroke-width="0.6"/><path d="M9.4 12.6 H13.4 M11.4 10.6 V14.6" stroke="#fff" stroke-width="1.4"/></svg><svg style="position:absolute;left:412px;top:667.55px;" width="15.5" height="15.5" viewBox="0 0 16 16" preserveAspectRatio="none"><circle cx="8" cy="8" r="7.6" fill="#000"/><rect x="3.6" y="6.6" width="8.8" height="2.8" fill="#fff"/></svg><div style="position:absolute;left:244px;top:722.6px;width:1256px;height:69.45000000000005px;background:#f0f0f0;"></div><div style="position:absolute;left:244px;top:792.0500000000001px;width:1256px;height:1.0px;background:#dee2e6;"></div><svg style="position:absolute;left:246.8px;top:734.5px;" width="13.199999999999989" height="16.0" viewBox="0 0 16 16" preserveAspectRatio="none"><rect x="1" y="1" width="14" height="14" rx="2.6" fill="#fff" stroke="#767676" stroke-width="1.4"/></svg><svg style="position:absolute;left:268.5px;top:737.0px;" width="16.0" height="17.5" viewBox="0 0 16 16" preserveAspectRatio="none"><path d="M11.6 0.8 L15.2 4.4 L5 14.6 L0.8 15.2 L1.4 11 Z" fill="#000"/><path d="M10.2 2.4 L13.6 5.8" stroke="#fff" stroke-width="0.8"/><path d="M1.6 12.2 L3.8 14.4" stroke="#fff" stroke-width="0.7"/></svg><svg style="position:absolute;left:338px;top:737.2px;" width="16.5" height="16.799999999999955" viewBox="0 0 16 16" preserveAspectRatio="none"><rect x="2.2" y="0.8" width="10.2" height="4.6" rx="1.2" fill="#000"/><circle cx="4.6" cy="3.1" r="1.1" fill="#fff"/><circle cx="7.3" cy="3.1" r="1.1" fill="#fff"/><circle cx="10" cy="3.1" r="1.1" fill="#fff"/><rect x="0.6" y="6.4" width="13.8" height="2.4" rx="0.4" fill="#000"/><rect x="2.2" y="10" width="5.4" height="5" rx="0.6" fill="#000"/><rect x="3.4" y="11.2" width="2.6" height="2.6" fill="#fff"/><circle cx="11.4" cy="12.6" r="3.6" fill="#000" stroke="#fff" stroke-width="0.6"/><path d="M9.4 12.6 H13.4 M11.4 10.6 V14.6" stroke="#fff" stroke-width="1.4"/></svg><svg style="position:absolute;left:412px;top:738.0px;" width="15.5" height="15.5" viewBox="0 0 16 16" preserveAspectRatio="none"><circle cx="8" cy="8" r="7.6" fill="#000"/><rect x="3.6" y="6.6" width="8.8" height="2.8" fill="#fff"/></svg><div style="position:absolute;left:244px;top:793.05px;width:1256px;height:69.45000000000005px;background:#ffffff;"></div><div style="position:absolute;left:244px;top:862.5px;width:1256px;height:1.0px;background:#dee2e6;"></div><svg style="position:absolute;left:246.8px;top:804.95px;" width="13.199999999999989" height="16.0" viewBox="0 0 16 16" preserveAspectRatio="none"><rect x="1" y="1" width="14" height="14" rx="2.6" fill="#fff" stroke="#767676" stroke-width="1.4"/></svg><svg style="position:absolute;left:268.5px;top:807.45px;" width="16.0" height="17.5" viewBox="0 0 16 16" preserveAspectRatio="none"><path d="M11.6 0.8 L15.2 4.4 L5 14.6 L0.8 15.2 L1.4 11 Z" fill="#000"/><path d="M10.2 2.4 L13.6 5.8" stroke="#fff" stroke-width="0.8"/><path d="M1.6 12.2 L3.8 14.4" stroke="#fff" stroke-width="0.7"/></svg><svg style="position:absolute;left:338px;top:807.6500000000001px;" width="16.5" height="16.799999999999955" viewBox="0 0 16 16" preserveAspectRatio="none"><rect x="2.2" y="0.8" width="10.2" height="4.6" rx="1.2" fill="#000"/><circle cx="4.6" cy="3.1" r="1.1" fill="#fff"/><circle cx="7.3" cy="3.1" r="1.1" fill="#fff"/><circle cx="10" cy="3.1" r="1.1" fill="#fff"/><rect x="0.6" y="6.4" width="13.8" height="2.4" rx="0.4" fill="#000"/><rect x="2.2" y="10" width="5.4" height="5" rx="0.6" fill="#000"/><rect x="3.4" y="11.2" width="2.6" height="2.6" fill="#fff"/><circle cx="11.4" cy="12.6" r="3.6" fill="#000" stroke="#fff" stroke-width="0.6"/><path d="M9.4 12.6 H13.4 M11.4 10.6 V14.6" stroke="#fff" stroke-width="1.4"/></svg><svg style="position:absolute;left:412px;top:808.45px;" width="15.5" height="15.5" viewBox="0 0 16 16" preserveAspectRatio="none"><circle cx="8" cy="8" r="7.6" fill="#000"/><rect x="3.6" y="6.6" width="8.8" height="2.8" fill="#fff"/></svg><div style="position:absolute;left:244px;top:863.5px;width:1256px;height:69.45000000000005px;background:#f0f0f0;"></div><div style="position:absolute;left:244px;top:932.95px;width:1256px;height:1.0px;background:#dee2e6;"></div><svg style="position:absolute;left:246.8px;top:875.4000000000001px;" width="13.199999999999989" height="16.0" viewBox="0 0 16 16" preserveAspectRatio="none"><rect x="1" y="1" width="14" height="14" rx="2.6" fill="#fff" stroke="#767676" stroke-width="1.4"/></svg><svg style="position:absolute;left:268.5px;top:877.9000000000001px;" width="16.0" height="17.5" viewBox="0 0 16 16" preserveAspectRatio="none"><path d="M11.6 0.8 L15.2 4.4 L5 14.6 L0.8 15.2 L1.4 11 Z" fill="#000"/><path d="M10.2 2.4 L13.6 5.8" stroke="#fff" stroke-width="0.8"/><path d="M1.6 12.2 L3.8 14.4" stroke="#fff" stroke-width="0.7"/></svg><svg style="position:absolute;left:338px;top:878.1000000000001px;" width="16.5" height="16.799999999999955" viewBox="0 0 16 16" preserveAspectRatio="none"><rect x="2.2" y="0.8" width="10.2" height="4.6" rx="1.2" fill="#000"/><circle cx="4.6" cy="3.1" r="1.1" fill="#fff"/><circle cx="7.3" cy="3.1" r="1.1" fill="#fff"/><circle cx="10" cy="3.1" r="1.1" fill="#fff"/><rect x="0.6" y="6.4" width="13.8" height="2.4" rx="0.4" fill="#000"/><rect x="2.2" y="10" width="5.4" height="5" rx="0.6" fill="#000"/><rect x="3.4" y="11.2" width="2.6" height="2.6" fill="#fff"/><circle cx="11.4" cy="12.6" r="3.6" fill="#000" stroke="#fff" stroke-width="0.6"/><path d="M9.4 12.6 H13.4 M11.4 10.6 V14.6" stroke="#fff" stroke-width="1.4"/></svg><svg style="position:absolute;left:412px;top:878.9000000000001px;" width="15.5" height="15.5" viewBox="0 0 16 16" preserveAspectRatio="none"><circle cx="8" cy="8" r="7.6" fill="#000"/><rect x="3.6" y="6.6" width="8.8" height="2.8" fill="#fff"/></svg>
<div class="t" style="left:11.2px;top:142.0px;font-family:'Liberation Sans';font-size:20px;font-weight:normal;color:#212529;transform:scaleX(0.7503)">Récentes</div><div class="t" style="left:88.2px;top:142.0px;font-family:'Liberation Sans';font-size:20px;font-weight:normal;color:#212529;transform:scaleX(0.7590)">Préférées</div><div class="t" style="left:53.2px;top:212.5px;font-family:'Liberation Sans';font-size:19.3px;font-weight:normal;color:#212529;transform:scaleX(0.8294)">garage</div><div class="t" style="left:78.2px;top:247.8px;font-family:'Liberation Sans';font-size:19.3px;font-weight:normal;color:#212529;transform:scaleX(0.8431)">Nouvelle table</div><div class="t" style="left:78.2px;top:282.7px;font-family:'Liberation Sans';font-size:19.3px;font-weight:normal;color:#212529;transform:scaleX(0.8300)">avis</div><div class="t" style="left:78.2px;top:317.5px;font-family:'Liberation Sans';font-size:19.3px;font-weight:normal;color:#212529;transform:scaleX(0.8300)">horaires</div><div class="t" style="left:78.2px;top:351.8px;font-family:'Liberation Sans';font-size:19.3px;font-weight:normal;color:#212529;transform:scaleX(0.8300)">services</div><div class="t" style="left:78.2px;top:387.1px;font-family:'Liberation Sans';font-size:19.3px;font-weight:normal;color:#212529;transform:scaleX(0.8300)">temoignages</div><div class="t" style="left:78.2px;top:421.8px;font-family:'Liberation Sans';font-size:19.3px;font-weight:normal;color:#212529;transform:scaleX(0.8300)">utilisateurs</div><div class="t" style="left:78.2px;top:456.3px;font-family:'Liberation Sans';font-size:19.3px;font-weight:normal;color:#212529;transform:scaleX(0.8300)">voitures</div><div class="t" style="left:53.2px;top:491.5px;font-family:'Liberation Sans';font-size:19.3px;font-weight:normal;color:#212529;transform:scaleX(0.8241)">information_schema</div><div class="t" style="left:53.2px;top:525.3px;font-family:'Liberation Sans';font-size:19.3px;font-weight:normal;color:#212529;transform:scaleX(0.8068)">performance_schema</div><div class="t" style="left:285.2px;top:17.0px;font-family:'Liberation Sans';font-size:20px;font-weight:normal;color:#0d6efd;transform:scaleX(0.7741)">Serveur : mysql</div><div class="t" style="left:434.2px;top:17.0px;font-family:'Liberation Sans';font-size:20px;font-weight:normal;color:#0d6efd;transform:scaleX(0.7729)">Base de données : garage</div><div class="t" style="left:657.2px;top:17.0px;font-family:'Liberation Sans';font-size:20px;font-weight:normal;color:#0d6efd;transform:scaleX(0.7848)">Table : voitures</div><div class="t" style="left:269.2px;top:75.7px;font-family:'Liberation Sans';font-size:20px;font-weight:normal;color:#4d4d4d;transform:scaleX(0.7796)">Parcourir</div><div class="t" style="left:372.7px;top:75.7px;font-family:'Liberation Sans';font-size:20px;font-weight:normal;color:#4d4d4d;transform:scaleX(0.7984)">Structure</div><div class="t" style="left:477.3px;top:75.7px;font-family:'Liberation Sans';font-size:20px;font-weight:normal;color:#4d4d4d;transform:scaleX(0.7362)">SQL</div><div class="t" style="left:546.5px;top:75.7px;font-family:'Liberation Sans';font-size:20px;font-weight:normal;color:#4d4d4d;transform:scaleX(0.7634)">Rechercher</div><div class="t" style="left:665.2px;top:75.7px;font-family:'Liberation Sans';font-size:20px;font-weight:normal;color:#4d4d4d;transform:scaleX(0.7967)">Insérer</div><div class="t" style="left:754.2px;top:75.7px;font-family:'Liberation Sans';font-size:20px;font-weight:normal;color:#4d4d4d;transform:scaleX(0.8017)">Exporter</div><div class="t" style="left:854.6px;top:75.7px;font-family:'Liberation Sans';font-size:20px;font-weight:normal;color:#4d4d4d;transform:scaleX(0.8445)">Importer</div><div class="t" style="left:957.2px;top:75.7px;font-family:'Liberation Sans';font-size:20px;font-weight:normal;color:#4d4d4d;transform:scaleX(0.8034)">Opérations</div><div class="t" style="left:1076.2px;top:75.7px;font-family:'Liberation Sans';font-size:20px;font-weight:normal;color:#4d4d4d;transform:scaleX(0.7839)">Déclencheurs</div><div class="t" style="left:258.4px;top:137.0px;font-family:'Liberation Mono';font-size:19px;font-weight:normal;color:#8a1a92;transform:scaleX(0.7998)">SELECT</div><div class="t" style="left:319.9px;top:137.0px;font-family:'Liberation Mono';font-size:19px;font-weight:normal;color:#ff00ff;transform:scaleX(0.9314)">*</div><div class="t" style="left:337.9px;top:137.0px;font-family:'Liberation Mono';font-size:19px;font-weight:normal;color:#8a1a92;transform:scaleX(0.7893)">FROM</div><div class="t" style="left:381.4px;top:137.0px;font-family:'Liberation Mono';font-size:19px;font-weight:normal;color:#202080;transform:scaleX(0.7561)">`voitures`</div><div class="t" style="left:263.2px;top:190.8px;font-family:'Liberation Sans';font-size:20px;font-weight:normal;color:#212529;transform:scaleX(0.8045)">Profilage</div><div class="t" style="left:246.7px;top:221.2px;font-family:'Liberation Sans';font-size:20px;font-weight:normal;color:#222;transform:scaleX(0.8050)">[</div><div class="t" style="left:255.7px;top:221.2px;font-family:'Liberation Sans';font-size:20px;font-weight:normal;color:#4a7fb5;transform:scaleX(0.7960)">Éditer en ligne</div><div class="t" style="left:361.7px;top:221.2px;font-family:'Liberation Sans';font-size:20px;font-weight:normal;color:#222;transform:scaleX(0.8050)">]</div><div class="t" style="left:370.5px;top:221.2px;font-family:'Liberation Sans';font-size:20px;font-weight:normal;color:#222;transform:scaleX(0.8050)">[</div><div class="t" style="left:380.0px;top:221.2px;font-family:'Liberation Sans';font-size:20px;font-weight:normal;color:#4a7fb5;transform:scaleX(0.7622)">Éditer</div><div class="t" style="left:425.2px;top:221.2px;font-family:'Liberation Sans';font-size:20px;font-weight:normal;color:#222;transform:scaleX(0.8050)">]</div><div class="t" style="left:434.7px;top:221.2px;font-family:'Liberation Sans';font-size:20px;font-weight:normal;color:#222;transform:scaleX(0.8050)">[</div><div class="t" style="left:442.5px;top:221.2px;font-family:'Liberation Sans';font-size:20px;font-weight:normal;color:#4a7fb5;transform:scaleX(0.7632)">Expliquer SQL</div><div class="t" style="left:545.2px;top:221.2px;font-family:'Liberation Sans';font-size:20px;font-weight:normal;color:#222;transform:scaleX(0.8050)">]</div><div class="t" style="left:554.0px;top:221.2px;font-family:'Liberation Sans';font-size:20px;font-weight:normal;color:#222;transform:scaleX(0.8050)">[</div><div class="t" style="left:562.8px;top:221.2px;font-family:'Liberation Sans';font-size:20px;font-weight:normal;color:#4a7fb5;transform:scaleX(0.7689)">Créer le code source PHP</div><div class="t" style="left:746.2px;top:221.2px;font-family:'Liberation Sans';font-size:20px;font-weight:normal;color:#222;transform:scaleX(0.8050)">]</div><div class="t" style="left:755.7px;top:221.2px;font-family:'Liberation Sans';font-size:20px;font-weight:normal;color:#222;transform:scaleX(0.8050)">[</div><div class="t" style="left:763.2px;top:221.2px;font-family:'Liberation Sans';font-size:20px;font-weight:normal;color:#4a7fb5;transform:scaleX(0.7866)">Actualiser</div><div class="t" style="left:837.2px;top:221.2px;font-family:'Liberation Sans';font-size:20px;font-weight:normal;color:#222;transform:scaleX(0.8050)">]</div><div class="t" style="left:288.2px;top:285.5px;font-family:'Liberation Sans';font-size:20px;font-weight:normal;color:#212529;transform:scaleX(0.8050)">1</div><div class="t" style="left:344.2px;top:285.5px;font-family:'Liberation Sans';font-size:20px;font-weight:normal;color:#f4f4f4;transform:scaleX(0.8258)">&gt;</div><div class="t" style="left:375.1px;top:285.5px;font-family:'Liberation Sans';font-size:20px;font-weight:normal;color:#f4f4f4;transform:scaleX(0.8895)">&gt;&gt;</div><div class="t" style="left:449.9px;top:285.7px;font-family:'Liberation Sans';font-size:20px;font-weight:normal;color:#212529;transform:scaleX(0.8124)">Tout afficher</div><div class="t" style="left:565.9px;top:285.7px;font-family:'Liberation Sans';font-size:20px;font-weight:normal;color:#212529;transform:scaleX(0.8036)">Nombre de lignes :</div><div class="t" style="left:721.2px;top:285.5px;font-family:'Liberation Sans';font-size:20px;font-weight:normal;color:#212529;transform:scaleX(0.8050)">25</div><div class="t" style="left:809.2px;top:285.7px;font-family:'Liberation Sans';font-size:20px;font-weight:normal;color:#212529;transform:scaleX(0.7848)">Filtrer les lignes:</div><div class="t" style="left:930.2px;top:285.7px;font-family:'Liberation Sans';font-size:20px;font-weight:normal;color:#757575;transform:scaleX(0.7884)">Chercher dans cette table</div><div class="t" style="left:1116.2px;top:285.7px;font-family:'Liberation Sans';font-size:20px;font-weight:normal;color:#212529;transform:scaleX(0.7822)">Trier par clé :</div><div class="t" style="left:1227.2px;top:285.5px;font-family:'Liberation Sans';font-size:20px;font-weight:normal;color:#212529;transform:scaleX(0.8050)">Aucun(e)</div><div class="t" style="left:251.8px;top:352.0px;font-family:'Liberation Sans';font-size:18px;font-weight:normal;color:#fff;transform:scaleX(0.7805)">Options supplémentaires</div><div class="t" style="left:523.5px;top:409.6px;font-family:'Liberation Sans';font-size:20px;font-weight:bold;color:#0d6efd;transform:scaleX(0.8364)">id</div><div class="t" style="left:555.8px;top:409.6px;font-family:'Liberation Sans';font-size:20px;font-weight:bold;color:#0d6efd;transform:scaleX(0.7902)">marque_voiture</div><div class="t" style="left:691.2px;top:409.6px;font-family:'Liberation Sans';font-size:20px;font-weight:bold;color:#0d6efd;transform:scaleX(0.7955)">modele_voiture</div><div class="t" style="left:825.8px;top:409.6px;font-family:'Liberation Sans';font-size:20px;font-weight:bold;color:#0d6efd;transform:scaleX(0.7921)">prix_voiture</div><div class="t" style="left:933.2px;top:409.6px;font-family:'Liberation Sans';font-size:20px;font-weight:bold;color:#0d6efd;transform:scaleX(0.7889)">annee_voiture</div><div class="t" style="left:1056.8px;top:409.6px;font-family:'Liberation Sans';font-size:20px;font-weight:bold;color:#0d6efd;transform:scaleX(0.8013)">kilometrage_voiture</div><div class="t" style="left:1225.2px;top:409.6px;font-family:'Liberation Sans';font-size:20px;font-weight:bold;color:#0d6efd;transform:scaleX(0.8011)">boite_voiture</div><div class="t" style="left:1342.8px;top:409.6px;font-family:'Liberation Sans';font-size:20px;font-weight:bold;color:#0d6efd;transform:scaleX(0.7934)">image_voiture</div><div class="t" style="left:288.2px;top:451.2px;font-family:'Liberation Sans';font-size:20px;font-weight:normal;color:#0d6efd;transform:scaleX(0.8040)">Éditer</div><div class="t" style="left:357.4px;top:451.2px;font-family:'Liberation Sans';font-size:20px;font-weight:normal;color:#0d6efd;transform:scaleX(0.8134)">Copier</div><div class="t" style="left:431.8px;top:451.2px;font-family:'Liberation Sans';font-size:20px;font-weight:normal;color:#0d6efd;transform:scaleX(0.8065)">Supprimer</div><div class="t" style="left:514.1px;top:451.2px;font-family:'Liberation Sans';font-size:20px;font-weight:normal;color:#212529;transform:scaleX(0.7341)">1001</div><div class="t" style="left:555.6px;top:451.2px;font-family:'Liberation Sans';font-size:20px;font-weight:normal;color:#212529;transform:scaleX(0.8050)">Toyota</div><div class="t" style="left:690.4px;top:451.2px;font-family:'Liberation Sans';font-size:20px;font-weight:normal;color:#212529;transform:scaleX(0.8050)">Corolla</div><div class="t" style="left:861.4px;top:451.2px;font-family:'Liberation Sans';font-size:20px;font-weight:normal;color:#212529;transform:scaleX(0.7725)">12000.00</div><div class="t" style="left:932.8px;top:451.2px;font-family:'Liberation Sans';font-size:20px;font-weight:normal;color:#212529;transform:scaleX(0.8212)">2018</div><div class="t" style="left:1174.0px;top:451.2px;font-family:'Liberation Sans';font-size:20px;font-weight:normal;color:#212529;transform:scaleX(0.8000)">30000</div><div class="t" style="left:1225.4px;top:451.2px;font-family:'Liberation Sans';font-size:20px;font-weight:normal;color:#212529;transform:scaleX(0.8050)">manuelle</div><div class="t" style="left:1342.8px;top:451.2px;font-family:'Liberation Sans';font-size:20px;font-weight:normal;color:#212529;transform:scaleX(0.8050)">toyota_corolla.png</div><div class="t" style="left:288.2px;top:521.6px;font-family:'Liberation Sans';font-size:20px;font-weight:normal;color:#0d6efd;transform:scaleX(0.8040)">Éditer</div><div class="t" style="left:357.4px;top:521.6px;font-family:'Liberation Sans';font-size:20px;font-weight:normal;color:#0d6efd;transform:scaleX(0.8134)">Copier</div><div class="t" style="left:431.8px;top:521.6px;font-family:'Liberation Sans';font-size:20px;font-weight:normal;color:#0d6efd;transform:scaleX(0.8065)">Supprimer</div><div class="t" style="left:514.1px;top:521.6px;font-family:'Liberation Sans';font-size:20px;font-weight:normal;color:#212529;transform:scaleX(0.7341)">1002</div><div class="t" style="left:555.6px;top:521.6px;font-family:'Liberation Sans';font-size:20px;font-weight:normal;color:#212529;transform:scaleX(0.8050)">Toyota</div><div class="t" style="left:690.4px;top:521.6px;font-family:'Liberation Sans';font-size:20px;font-weight:normal;color:#212529;transform:scaleX(0.8050)">Camry</div><div class="t" style="left:861.4px;top:521.6px;font-family:'Liberation Sans';font-size:20px;font-weight:normal;color:#212529;transform:scaleX(0.7725)">15000.00</div><div class="t" style="left:932.8px;top:521.6px;font-family:'Liberation Sans';font-size:20px;font-weight:normal;color:#212529;transform:scaleX(0.8212)">2017</div><div class="t" style="left:1174.0px;top:521.6px;font-family:'Liberation Sans';font-size:20px;font-weight:normal;color:#212529;transform:scaleX(0.8000)">40000</div><div class="t" style="left:1225.4px;top:521.6px;font-family:'Liberation Sans';font-size:20px;font-weight:normal;color:#212529;transform:scaleX(0.8050)">manuelle</div><div class="t" style="left:1342.8px;top:521.6px;font-family:'Liberation Sans';font-size:20px;font-weight:normal;color:#212529;transform:scaleX(0.8050)">toyota_camry.png</div><div class="t" style="left:288.2px;top:592.1px;font-family:'Liberation Sans';font-size:20px;font-weight:normal;color:#0d6efd;transform:scaleX(0.8040)">Éditer</div><div class="t" style="left:357.4px;top:592.1px;font-family:'Liberation Sans';font-size:20px;font-weight:normal;color:#0d6efd;transform:scaleX(0.8134)">Copier</div><div class="t" style="left:431.8px;top:592.1px;font-family:'Liberation Sans';font-size:20px;font-weight:normal;color:#0d6efd;transform:scaleX(0.8065)">Supprimer</div><div class="t" style="left:514.1px;top:592.1px;font-family:'Liberation Sans';font-size:20px;font-weight:normal;color:#212529;transform:scaleX(0.7341)">1003</div><div class="t" style="left:555.6px;top:592.1px;font-family:'Liberation Sans';font-size:20px;font-weight:normal;color:#212529;transform:scaleX(0.8050)">Toyota</div><div class="t" style="left:690.4px;top:592.1px;font-family:'Liberation Sans';font-size:20px;font-weight:normal;color:#212529;transform:scaleX(0.8050)">RAV4</div><div class="t" style="left:861.4px;top:592.1px;font-family:'Liberation Sans';font-size:20px;font-weight:normal;color:#212529;transform:scaleX(0.7725)">20000.00</div><div class="t" style="left:932.8px;top:592.1px;font-family:'Liberation Sans';font-size:20px;font-weight:normal;color:#212529;transform:scaleX(0.8212)">2019</div><div class="t" style="left:1174.0px;top:592.1px;font-family:'Liberation Sans';font-size:20px;font-weight:normal;color:#212529;transform:scaleX(0.8000)">25000</div><div class="t" style="left:1225.4px;top:592.1px;font-family:'Liberation Sans';font-size:20px;font-weight:normal;color:#212529;transform:scaleX(0.8050)">automatique</div><div class="t" style="left:1342.8px;top:592.1px;font-family:'Liberation Sans';font-size:20px;font-weight:normal;color:#212529;transform:scaleX(0.8050)">toyota_rav4.png</div><div class="t" style="left:288.2px;top:662.5px;font-family:'Liberation Sans';font-size:20px;font-weight:normal;color:#0d6efd;transform:scaleX(0.8040)">Éditer</div><div class="t" style="left:357.4px;top:662.5px;font-family:'Liberation Sans';font-size:20px;font-weight:normal;color:#0d6efd;transform:scaleX(0.8134)">Copier</div><div class="t" style="left:431.8px;top:662.5px;font-family:'Liberation Sans';font-size:20px;font-weight:normal;color:#0d6efd;transform:scaleX(0.8065)">Supprimer</div><div class="t" style="left:514.1px;top:662.5px;font-family:'Liberation Sans';font-size:20px;font-weight:normal;color:#212529;transform:scaleX(0.7341)">1004</div><div class="t" style="left:555.6px;top:662.5px;font-family:'Liberation Sans';font-size:20px;font-weight:normal;color:#212529;transform:scaleX(0.8050)">Honda</div><div class="t" style="left:690.4px;top:662.5px;font-family:'Liberation Sans';font-size:20px;font-weight:normal;color:#212529;transform:scaleX(0.8050)">Civic</div><div class="t" style="left:861.4px;top:662.5px;font-family:'Liberation Sans';font-size:20px;font-weight:normal;color:#212529;transform:scaleX(0.7725)">14000.00</div><div class="t" style="left:932.8px;top:662.5px;font-family:'Liberation Sans';font-size:20px;font-weight:normal;color:#212529;transform:scaleX(0.8212)">2019</div><div class="t" style="left:1174.0px;top:662.5px;font-family:'Liberation Sans';font-size:20px;font-weight:normal;color:#212529;transform:scaleX(0.8000)">25000</div><div class="t" style="left:1225.4px;top:662.5px;font-family:'Liberation Sans';font-size:20px;font-weight:normal;color:#212529;transform:scaleX(0.8050)">manuelle</div><div class="t" style="left:1342.8px;top:662.5px;font-family:'Liberation Sans';font-size:20px;font-weight:normal;color:#212529;transform:scaleX(0.8050)">honda_civic.png</div><div class="t" style="left:288.2px;top:733.0px;font-family:'Liberation Sans';font-size:20px;font-weight:normal;color:#0d6efd;transform:scaleX(0.8040)">Éditer</div><div class="t" style="left:357.4px;top:733.0px;font-family:'Liberation Sans';font-size:20px;font-weight:normal;color:#0d6efd;transform:scaleX(0.8134)">Copier</div><div class="t" style="left:431.8px;top:733.0px;font-family:'Liberation Sans';font-size:20px;font-weight:normal;color:#0d6efd;transform:scaleX(0.8065)">Supprimer</div><div class="t" style="left:514.1px;top:733.0px;font-family:'Liberation Sans';font-size:20px;font-weight:normal;color:#212529;transform:scaleX(0.7341)">1005</div><div class="t" style="left:555.6px;top:733.0px;font-family:'Liberation Sans';font-size:20px;font-weight:normal;color:#212529;transform:scaleX(0.8050)">Honda</div><div class="t" style="left:690.4px;top:733.0px;font-family:'Liberation Sans';font-size:20px;font-weight:normal;color:#212529;transform:scaleX(0.8050)">Accord</div><div class="t" style="left:861.4px;top:733.0px;font-family:'Liberation Sans';font-size:20px;font-weight:normal;color:#212529;transform:scaleX(0.7725)">18000.00</div><div class="t" style="left:932.8px;top:733.0px;font-family:'Liberation Sans';font-size:20px;font-weight:normal;color:#212529;transform:scaleX(0.8212)">2020</div><div class="t" style="left:1174.0px;top:733.0px;font-family:'Liberation Sans';font-size:20px;font-weight:normal;color:#212529;transform:scaleX(0.8000)">22000</div><div class="t" style="left:1225.4px;top:733.0px;font-family:'Liberation Sans';font-size:20px;font-weight:normal;color:#212529;transform:scaleX(0.8050)">automatique</div><div class="t" style="left:1342.8px;top:733.0px;font-family:'Liberation Sans';font-size:20px;font-weight:normal;color:#212529;transform:scaleX(0.8050)">honda_accord.png</div><div class="t" style="left:288.2px;top:803.5px;font-family:'Liberation Sans';font-size:20px;font-weight:normal;color:#0d6efd;transform:scaleX(0.8040)">Éditer</div><div class="t" style="left:357.4px;top:803.5px;font-family:'Liberation Sans';font-size:20px;font-weight:normal;color:#0d6efd;transform:scaleX(0.8134)">Copier</div><div class="t" style="left:431.8px;top:803.5px;font-family:'Liberation Sans';font-size:20px;font-weight:normal;color:#0d6efd;transform:scaleX(0.8065)">Supprimer</div><div class="t" style="left:514.1px;top:803.5px;font-family:'Liberation Sans';font-size:20px;font-weight:normal;color:#212529;transform:scaleX(0.7341)">1006</div><div class="t" style="left:555.6px;top:803.5px;font-family:'Liberation Sans';font-size:20px;font-weight:normal;color:#212529;transform:scaleX(0.8050)">Honda</div><div class="t" style="left:690.4px;top:803.5px;font-family:'Liberation Sans';font-size:20px;font-weight:normal;color:#212529;transform:scaleX(0.8050)">CR-V</div><div class="t" style="left:861.4px;top:803.5px;font-family:'Liberation Sans';font-size:20px;font-weight:normal;color:#212529;transform:scaleX(0.7725)">21000.00</div><div class="t" style="left:932.8px;top:803.5px;font-family:'Liberation Sans';font-size:20px;font-weight:normal;color:#212529;transform:scaleX(0.8212)">2018</div><div class="t" style="left:1174.0px;top:803.5px;font-family:'Liberation Sans';font-size:20px;font-weight:normal;color:#212529;transform:scaleX(0.8000)">32000</div><div class="t" style="left:1225.4px;top:803.5px;font-family:'Liberation Sans';font-size:20px;font-weight:normal;color:#212529;transform:scaleX(0.8050)">manuelle</div><div class="t" style="left:1342.8px;top:803.5px;font-family:'Liberation Sans';font-size:20px;font-weight:normal;color:#212529;transform:scaleX(0.8050)">honda_cr-v.png</div><div class="t" style="left:288.2px;top:873.9px;font-family:'Liberation Sans';font-size:20px;font-weight:normal;color:#0d6efd;transform:scaleX(0.8040)">Éditer</div><div class="t" style="left:357.4px;top:873.9px;font-family:'Liberation Sans';font-size:20px;font-weight:normal;color:#0d6efd;transform:scaleX(0.8134)">Copier</div><div class="t" style="left:431.8px;top:873.9px;font-family:'Liberation Sans';font-size:20px;font-weight:normal;color:#0d6efd;transform:scaleX(0.8065)">Supprimer</div><div class="t" style="left:514.1px;top:873.9px;font-family:'Liberation Sans';font-size:20px;font-weight:normal;color:#212529;transform:scaleX(0.7341)">1007</div><div class="t" style="left:555.6px;top:873.9px;font-family:'Liberation Sans';font-size:20px;font-weight:normal;color:#212529;transform:scaleX(0.8050)">Ford</div><div class="t" style="left:690.4px;top:873.9px;font-family:'Liberation Sans';font-size:20px;font-weight:normal;color:#212529;transform:scaleX(0.8050)">Focus</div><div class="t" style="left:861.4px;top:873.9px;font-family:'Liberation Sans';font-size:20px;font-weight:normal;color:#212529;transform:scaleX(0.7869)">11000.00</div><div class="t" style="left:932.8px;top:873.9px;font-family:'Liberation Sans';font-size:20px;font-weight:normal;color:#212529;transform:scaleX(0.8212)">2017</div><div class="t" style="left:1174.0px;top:873.9px;font-family:'Liberation Sans';font-size:20px;font-weight:normal;color:#212529;transform:scaleX(0.8000)">35000</div><div class="t" style="left:1225.4px;top:873.9px;font-family:'Liberation Sans';font-size:20px;font-weight:normal;color:#212529;transform:scaleX(0.8050)">automatique</div><div class="t" style="left:1342.8px;top:873.9px;font-family:'Liberation Sans';font-size:20px;font-weight:normal;color:#212529;transform:scaleX(0.8050)">ford_focus.png</div>
<div style="position:absolute;left:236px;top:865px;width:208.5px;height:33px;background:#cfcfcf;border-top:1px solid #bdbdbd;border-right:1px solid #bdbdbd;border-top-right-radius:5px;box-sizing:border-box"></div><svg style="position:absolute;left:245px;top:876px;" width="14" height="16" viewBox="0 0 16 16" preserveAspectRatio="none"><rect x="1" y="1" width="14" height="14" fill="#fff" stroke="#222" stroke-width="1.6"/><path d="M4 4.6 L7.6 7.6 L4 10.6" fill="none" stroke="#000" stroke-width="1.6"/><path d="M8.4 11.6 H12" stroke="#000" stroke-width="1.2"/></svg><div style="position:absolute;left:0px;top:897px;width:1500px;height:1px;background:#fafafa;"></div><div style="position:absolute;left:0px;top:898px;width:1500px;height:2px;background:#262626;"></div><div style="position:absolute;left:0px;top:2px;width:1500px;height:1.5px;background:rgba(245,247,250,0.7);"></div><div style="position:absolute;left:1px;top:2px;width:1px;height:895px;background:rgba(255,255,255,0.6);"></div><svg style="position:absolute;left:0;top:0" width="6" height="6" viewBox="0 0 6 6"><path d="M0 0 H6 V2 C3.5 2 2 3.5 0 5 Z" fill="#2a2a2a"/></svg>
<div class="t" style="left:263.7px;top:872.8px;font-family:'Liberation Sans';font-size:20px;font-weight:normal;color:#333;transform:scaleX(0.7670)">Console de requêtes SQL</div>
</body></html>
